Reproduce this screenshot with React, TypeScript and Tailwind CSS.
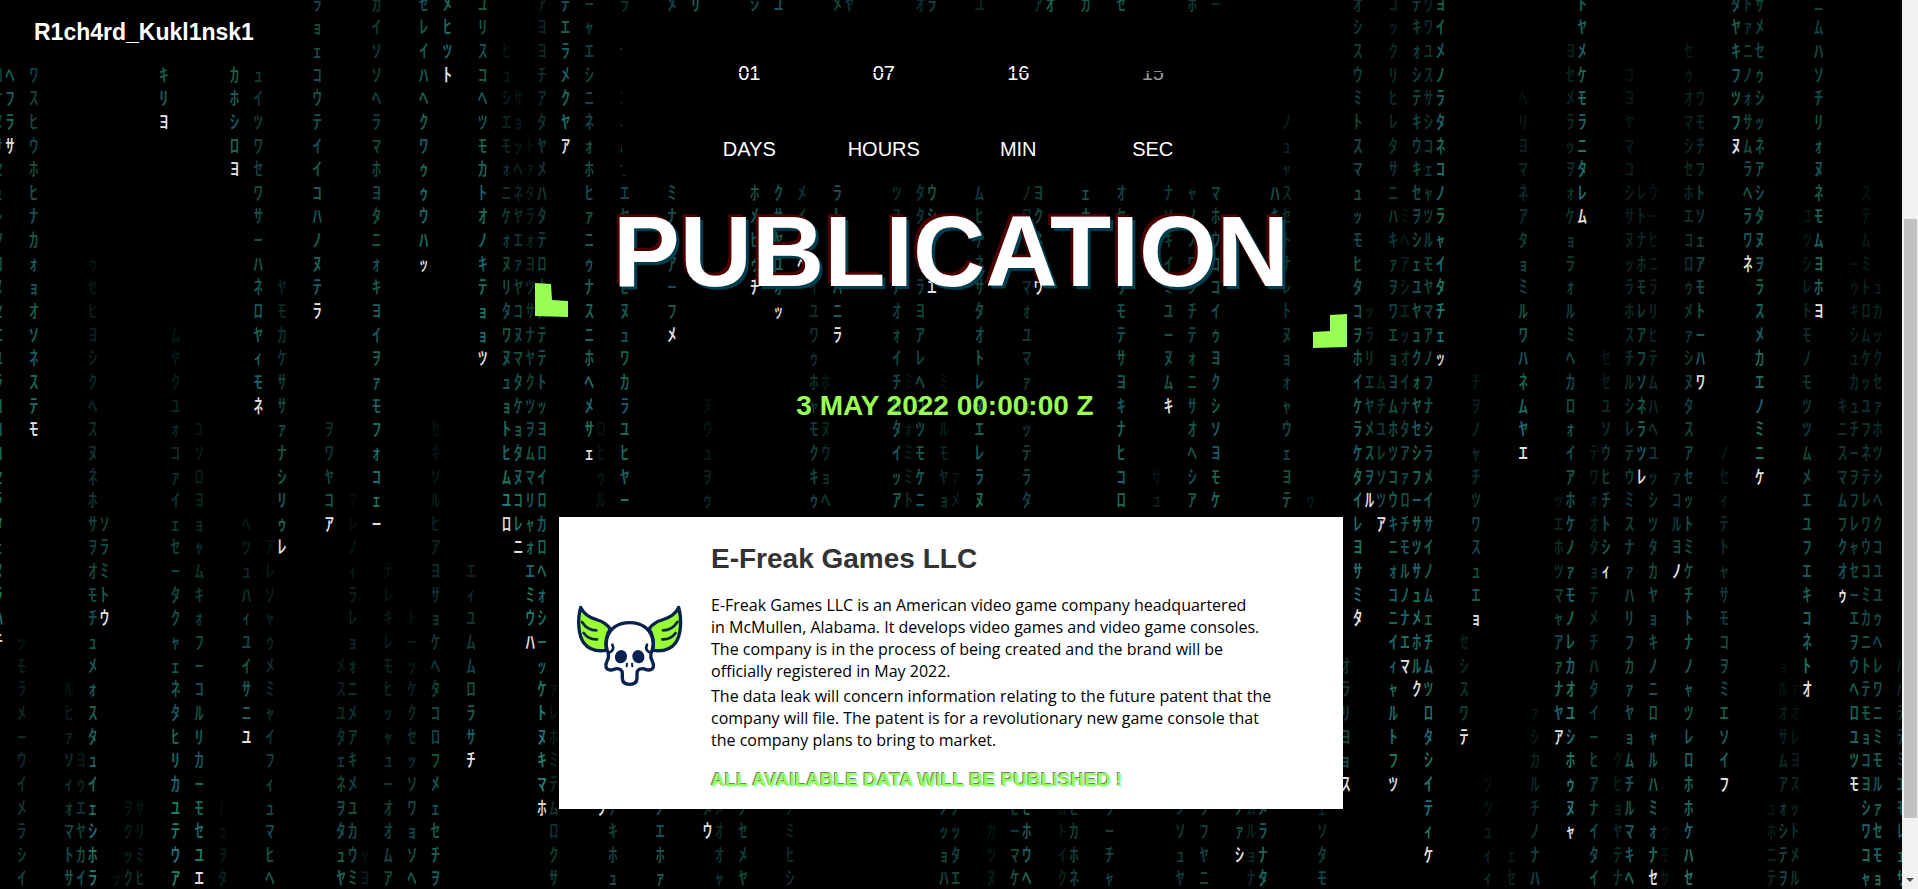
type Stream = [col: number, row: number, glyphs: string, from: number, to: number, lit?: boolean];

// Each stream: column, first row, glyphs from top to bottom, strength at its top and bottom, lit head.
const STREAMS: Stream[] = [
  [-1, 3, "ヨケヌサセュレソロヌセエユラヨココセラタェヌラハチ", 45, 80, true],
  [0, 3, "ヘフラサ", 65, 75, true],
  [1, 27, "ッモラメーウイメラシイ", 18, 45],
  [2, 3, "ワスヒウホヒナカォョオソネステモ", 45, 75, true],
  [5, 29, "ルヒァソィォマトサ", 14, 60],
  [6, 32, "ヨゥエヤカイ", 18, 58],
  [7, 11, "ゥセヒヨシクヘスヌネホサヲオモチュメォスタュイェシホラ", 14, 85],
  [8, 22, "ソラミトウ", 45, 65, true],
  [9, 37, "ッ", 18, 18],
  [10, 34, "ヲクック", 14, 32],
  [11, 34, "サリミヒ", 14, 32],
  [13, 3, "キリヨ", 65, 70, true],
  [14, 14, "ムヤクユォコァイェセータクャェネタヒリカユテウア", 14, 90],
  [16, 18, "ユソロヨョャムキォフーコルリカーモセユエ", 14, 85, true],
  [18, 34, "トュヲタ", 8, 24],
  [19, 3, "カホシロヨ", 65, 75, true],
  [20, 22, "ヘツュハィユイサニユ", 18, 75, true],
  [21, 3, "ュイツワセワサーハネロヤィモネ", 38, 75, true],
  [22, 23, "アレソャゥメミャイフィュマヒヘ", 14, 60],
  [23, 12, "ヤモカケササァナシリゥレ", 24, 75, true],
  [26, 0, "ラョェコウテイイコハノヌテラ", 50, 70, true],
  [27, 18, "ヲワヤコア", 30, 65, true],
  [28, 28, "メスユタェネヲタュヤ", 18, 70],
  [29, 21, "マレノィラレョォニメアキメユカウミ", 8, 60],
  [30, 36, "ャヨ", 12, 20],
  [31, 0, "カイソソヘラマホヨタニォキヨイヲァモフォコェー", 38, 80, true],
  [32, 24, "ナレキレモヒッャューオオムア", 12, 50],
  [34, 26, "トーッケクセッソワョソヘ", 12, 60],
  [35, 0, "セレイハヘクワゥゥウハッ", 60, 78, true],
  [36, 18, "セキソルヒアヨサョケヘタコロフメェセチヲ", 12, 68],
  [37, 0, "メヒツト", 70, 80, true],
  [39, 24, "エィユムムロラサチ", 24, 75, true],
  [40, 0, "ユリスコヘツモカトオノキテョョツ", 55, 82, true],
  [42, 2, "ヒュシエモォニケォヌリタワヌュョトヒムユロ", 14, 88, true],
  [43, 4, "サョッヘネヤエァヤコヌマタケョタヌコレニ", 14, 80, true],
  [44, 6, "トァタラォヨツサナヤクツヲムマリャォエミウハ", 12, 85, true],
  [45, 0, "アヨヨチアタヤメハタテロナヌテテトッヨロイロカロヘォシーッケトヌキマホ", 24, 90, true],
  [46, 29, "ァレホミテムロクサ", 14, 45],
  [47, 0, "テエラメクヤア", 60, 80, true],
  [49, 0, "ーャエシニネォホヒァニゥナスニホヘメサェ", 40, 80, true],
  [50, 18, "ロヒゥルノロメタヨソアコナシキムウ", 12, 45, true],
  [51, 34, "ナキホュ", 40, 55],
  [52, 0, "ラトヤミコネハサエヤヌコヒヌュワカラユヒヤー", 35, 75],
  [55, 34, "ノエホァ", 55, 65],
  [56, 0, "メ", 50, 50],
  [56, 8, "ミナモアーフメ", 55, 62, true],
  [58, 0, "リ", 65, 65],
  [59, 17, "ヌウュヲゥ", 10, 28],
  [59, 34, "メウ", 40, 50, true],
  [60, 34, "メオオャ", 24, 38],
  [62, 34, "ノセメヤ", 40, 50],
  [63, 0, "シ", 55, 55],
  [63, 8, "ホメヒゥチ", 60, 70, true],
  [65, 0, "ユ", 60, 60],
  [65, 8, "クサヤユオッ", 55, 70, true],
  [66, 34, "ノミヒシ", 22, 35],
  [67, 8, "メイノヘ", 35, 42, true],
  [68, 12, "イユワゥホャモクキゥ", 28, 50],
  [69, 16, "ホャヌウョヘ", 18, 38],
  [70, 0, "メ", 45, 45],
  [70, 8, "ラトヤワハニラ", 58, 64, true],
  [71, 0, "ヤヨ", 38, 14],
  [75, 8, "ツヌヤトナオォイチロタイッア", 32, 65],
  [76, 16, "ミトォミミト", 12, 30],
  [77, 0, "オ", 32, 32],
  [77, 8, "タタマィラヨアレヘコツモケニ", 35, 65],
  [78, 0, "ラ", 45, 45],
  [78, 8, "ウシラレエ", 60, 70, true],
  [79, 16, "ミョルモヤョ", 12, 32],
  [79, 34, "ノッョハ", 42, 50],
  [80, 20, "ァメ", 15, 22],
  [80, 34, "ノッタエ", 40, 48],
  [82, 0, "ユ", 26, 26],
  [82, 8, "ムヒチネサタオトレヌエレラヌ", 42, 72],
  [83, 35, "カツヌ", 14, 18],
  [85, 34, "ヒーマケ", 40, 54],
  [86, 8, "ノワヤツマォユマァュッテラタ", 28, 48],
  [86, 34, "ヒホウヘ", 60, 70],
  [87, 0, "ア", 34, 34],
  [87, 8, "ヨクネモウ", 45, 60, true],
  [88, 0, "オ", 66, 66],
  [89, 34, "ムトイク", 14, 24],
  [90, 34, "ヒカホネ", 40, 48],
  [91, 0, "カ", 58, 58],
  [91, 8, "ェナヤー", 60, 60],
  [93, 34, "ラーチャ", 40, 50],
  [94, 0, "セ", 60, 60],
  [94, 8, "オセマヌウモテサヨキナヒコロ", 48, 72],
  [97, 20, "サュ", 14, 24],
  [98, 8, "ナソキイミユーヌムキ", 36, 62, true],
  [99, 34, "ンソュヤ", 38, 42],
  [100, 0, "ホ", 48, 48],
  [100, 8, "ャノノワシチテォニサオヘシア", 38, 62],
  [101, 34, "フフヤニ", 40, 48],
  [102, 0, "ー", 30, 30],
  [102, 8, "マホウココイゥヨクシソヨモケ", 48, 70],
  [104, 34, "ノァシ", 55, 60, true],
  [105, 34, "ムルョナ", 22, 28],
  [106, 34, "メラナタ", 62, 72],
  [107, 8, "ハキ", 55, 55],
  [108, 5, "ノュャスセトナレトヌョォャウェヨテ", 22, 55],
  [110, 21, "ゥ", 20, 20],
  [111, 34, "ェソタモ", 28, 50],
  [113, 28, "オラリヨョス", 35, 60, true],
  [114, 0, "オシスウミトスマュッモヒタコヲホイケラケタイレヨサミタ", 38, 85, true],
  [115, 13, "ッラリエヤメスヲル", 20, 75, true],
  [116, 16, "ムチユレソツア", 28, 62, true],
  [117, 0, "コックリヒレタサニハキァヲワエョヨムホツコウキニォコニイィャルトフツ", 24, 82, true],
  [118, 9, "ミヘアシエッオイナタアァロチモルノナエマ", 14, 80, true],
  [119, 0, "テキォシテキウキセヲシェユヤュクォヤセシフーサツサュメホルク", 40, 82, true],
  [120, 0, "ウワユスサシコェャツルモヤマアノフナシラメイサイノムェチムツロタシイティケ", 28, 85, true],
  [121, 0, "ヨイメノラタネコノラャイタチェッ", 62, 85, true],
  [123, 27, "セシスワテ", 22, 48, true],
  [124, 16, "チヲノャチツワスュエョ", 16, 65, true],
  [125, 33, "ツツュィィ", 12, 30],
  [127, 36, "ェセ", 16, 22],
  [128, 4, "ヘリヨマネアタョミルワハネムヤエ", 14, 85, true],
  [129, 30, "ァシカルチノナハ", 14, 50],
  [131, 21, "ッエホツマャアァナヤア", 18, 78, true],
  [132, 2, "ヨセメラッヲォケョラォルミヘカロォイアホケノァモノレカオユシホゥヌャ", 22, 90, true],
  [133, 0, "トヤメケモラニタレム", 65, 82, true],
  [134, 19, "テワォオタョテメチハタイーヒアナイタイ", 18, 58],
  [135, 15, "セセユソウヒチトシィ", 16, 65, true],
  [136, 32, "クヒョヤテナ", 16, 35],
  [137, 3, "コヨヤマコシサヌッラホスチルシレテウミスナァハリフカァヤョムチルマキヘ", 14, 70],
  [138, 8, "レトナホモレアフソネラツレ", 20, 75, true],
  [139, 8, "ウーヒニラリヒテムハヘユッシツタカヤョキノニロャルハミォナセ", 14, 75, true],
  [140, 35, "ゥモサ", 10, 16],
  [141, 20, "ァコルヨノ", 30, 60, true],
  [142, 2, "セゥオマシセホエコロゥメァシヌタスアセットミケチトナノャツレロホホケハセ", 18, 80],
  [143, 4, "ウモチフトソェアモトーハワ", 22, 70, true],
  [145, 19, "ノセィテトャサモコヲミエソイフ", 14, 75, true],
  [146, 0, "タヤキフツフヌ", 60, 75, true],
  [147, 0, "トァニノォサムラヘラワネ", 34, 65, true],
  [148, 0, "サメセゥシッネアシタヌヲラスメカエノミニケ", 45, 80, true],
  [149, 34, "ュホニテ", 14, 30],
  [150, 28, "ョルオサムアォシテヲ", 10, 50],
  [151, 29, "ァオレヨスットメル", 10, 38],
  [152, 9, "ユツシレトモノモツツムメエユフエキコネトオ", 14, 80, true],
  [153, 0, "ニムハソチリォヌネモムヨホヨ", 45, 75, true],
  [155, 17, "キニスマムフクオゥ", 28, 65, true],
  [156, 11, "ーゥキシュカュチーヲフレャセーエヲウヘロユツモ", 14, 78, true],
  [157, 8, "ステムミトロムケッユフネテレワウコミカニトテモョコヨシワコャ", 14, 75],
  [158, 12, "ュカックセァホツシヘクコユユゥヘレワニミモルァセモョ", 20, 75],
  [160, 28, "ハハテテミエモレェサ", 25, 75],
];

// The glyphs are drawn in their half-width forms, keyed here by the full-width character.
const HALF = new Map<string, string>();
for (let code = 0xff66; code <= 0xff9d; code += 1) {
  const half = String.fromCharCode(code);
  HALF.set(half.normalize("NFKC"), half);
}

const TEALS = ["#27958a", "#278a95", "#27967a"];

function DigitalRain() {
  return (
    <svg
      aria-hidden="true"
      className="absolute inset-0 h-full w-full font-['Noto_Sans_CJK_JP',sans-serif] font-medium"
      viewBox="0 0 1610 752"
      preserveAspectRatio="xMidYMid slice"
      fontSize="16"
      textAnchor="middle"
    >
      {STREAMS.map(([col, row, glyphs, from, to, lit]) =>
        [...glyphs].map((glyph, i) => {
          const last = i === glyphs.length - 1;
          const head = lit && last;
          const strength = from + ((to - from) * i) / Math.max(glyphs.length - 1, 1);
          return (
            <text
              key={`${col}-${row + i}`}
              x={9 + col * 10}
              y={9 + (row + i) * 20}
              fill={head ? "#f1eff0" : TEALS[Math.abs(col * 2 + row + i) % 3]}
              opacity={head ? 0.95 : strength / 100}
            >
              {HALF.get(glyph) ?? glyph}
            </text>
          );
        }),
      )}
    </svg>
  );
}

const UNITS = [
  { value: "01", label: "DAYS" },
  { value: "07", label: "HOURS" },
  { value: "16", label: "MIN" },
  { value: "15", label: "SEC", flipping: true },
];

function Countdown() {
  return (
    <div className="w-full max-w-[658px] bg-black px-[60px] pt-10 pb-[11px] text-xl leading-[30px] text-white">
      <dl className="grid grid-cols-4">
        {UNITS.map(({ value, label, flipping }) => (
          <div key={label} className="flex flex-col-reverse items-center gap-[46px]">
            <dt>{label}</dt>
            <dd className={flipping ? "relative text-[#999] [clip-path:inset(13px_0_0)]" : "relative"}>
              {value}
              <span className="absolute inset-x-0 top-[14px] h-px bg-black" />
            </dd>
          </div>
        ))}
      </dl>
    </div>
  );
}

function WingedSkull() {
  return (
    <svg
      role="img"
      aria-label="E-Freak Games logo"
      viewBox="45 42 330 252"
      className="mt-[87px] h-[84px] w-[110px] shrink-0"
      fill="none"
      stroke="#06204f"
      strokeWidth="10"
      strokeLinecap="round"
      strokeLinejoin="round"
    >
      <g id="wing">
        <path
          fill="#99ff33"
          d="M62 52 C72 76 92 84 112 90 C130 95 142 104 151 117 C139 133 136 153 139 181 C112 185 86 178 71 158 C56 137 51 92 62 52 Z"
        />
        <path fill="none" strokeWidth="8" d="M66 96 C76 112 90 121 109 121 M71 129 C82 144 94 149 111 148" />
      </g>
      <use href="#wing" transform="translate(418 0) scale(-1 1)" />
      <path
        fill="#fff"
        d="M145 190 C138 174 137 158 141 144 C149 115 175 98 209 98 C243 98 269 115 277 144 C281 158 280 174 273 190 C271 199 273 207 277 214 C284 227 281 239 267 240 C259 241 255 236 248 236 C238 236 231 240 231 251 L231 264 C231 276 223 283 209 283 C195 283 187 276 187 264 L187 251 C187 240 180 236 170 236 C163 236 159 241 151 240 C137 239 134 227 141 214 C145 207 147 199 145 190 Z"
      />
      <path strokeWidth="8" d="M157 164 C162 174 160 182 148 188 M261 164 C256 174 258 182 270 188" />
      <ellipse cx="183" cy="200" rx="18" ry="20" fill="#06204f" stroke="none" transform="rotate(20 183 200)" />
      <ellipse cx="235" cy="200" rx="18" ry="20" fill="#06204f" stroke="none" transform="rotate(-20 235 200)" />
      <path strokeWidth="6" d="M201 221 L200 229 M216 221 L217 229" />
    </svg>
  );
}

function CompanyCard() {
  return (
    <article className="mt-[93px] flex w-full max-w-[784px] gap-[26px] bg-white pr-4 pb-[17px] pl-4">
      <WingedSkull />
      <div className="pt-[25px]">
        <h2 className="text-[28px] leading-[34px] font-bold text-[#333]">E-Freak Games LLC</h2>
        <div className="mt-[18px] flex flex-col gap-[3px] font-['Open_Sans',sans-serif] text-base leading-[22px] text-black">
          <p>
            E-Freak Games LLC is an American video game company headquartered
            <br />
            in McMullen, Alabama. It develops video games and video game consoles.
            <br />
            The company is in the process of being created and the brand will be
            <br />
            officially registered in May 2022.
          </p>
          <p>
            The data leak will concern information relating to the future patent that the
            <br />
            company will file. The patent is for a revolutionary new game console that
            <br />
            the company plans to bring to market.
          </p>
        </div>
        <p className="mt-[17px] text-[19px] leading-6 font-bold text-[#99ff55] [text-shadow:-1px_-1px_0_#777,1px_1px_0_#b5fff0]">
          ALL AVAILABLE DATA WILL BE PUBLISHED !
        </p>
      </div>
    </article>
  );
}

function Announcement() {
  return (
    <section className="relative mt-[26px] flex w-full max-w-[812px] flex-col items-center">
      <svg aria-hidden="true" viewBox="0 0 33 34" className="absolute top-[82px] -left-2.5 h-[34px] w-[33px]">
        <path fill="#99ff55" d="M0 0 L16 1 L17 17 L33 18 L33 34 L0 33 Z" />
      </svg>
      <svg aria-hidden="true" viewBox="0 0 34 34" className="absolute top-[113px] right-2.5 h-[34px] w-[34px]">
        <path fill="#99ff55" d="M17 1 L34 0 L34 33 L0 34 L0 18 L17 17 Z" />
      </svg>
      <h1 className="text-[100px] leading-[100px] font-bold text-white [text-shadow:-3px_-3px_0_#4d0000,3px_3px_0_#003d4d]">
        PUBLICATION
      </h1>
      <p className="mt-[87px] pr-3 text-[28px] leading-9 font-bold text-[#99ff55]">3 MAY 2022 00:00:00 Z</p>
    </section>
  );
}

function ScrollTrack() {
  return (
    <div aria-hidden="true" className="flex h-screen w-4 shrink-0 flex-col items-center bg-[#f1f1f1] pt-[219px] pb-[7px]">
      <div className="w-[13px] flex-1 bg-[#c1c1c1]" />
      <svg viewBox="0 0 8 4" className="mt-[60px] h-1 w-2">
        <path fill="#505050" d="M0 0 H8 L4 4 Z" />
      </svg>
    </div>
  );
}

export default function App() {
  return (
    <div className="flex min-h-screen bg-black font-['Liberation_Sans',Arial,sans-serif]">
      <div className="relative min-w-0 flex-1 overflow-hidden">
        <DigitalRain />
        <header className="absolute top-0 left-0 px-[34px] py-4">
          <a href="#top" className="block text-[23px] leading-8 font-bold text-white">
            R1ch4rd_Kukl1nsk1
          </a>
        </header>
        <main className="relative flex flex-col items-center pt-[18px]">
          <Countdown />
          <Announcement />
          <CompanyCard />
        </main>
      </div>
      <ScrollTrack />
    </div>
  );
}
